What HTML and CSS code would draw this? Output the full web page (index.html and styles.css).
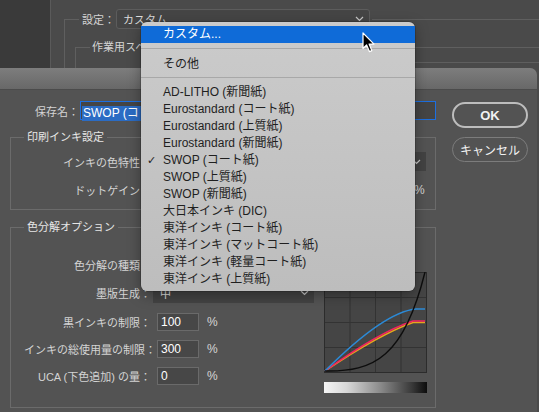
FILE: index.html
```html
<!DOCTYPE html>
<html lang="ja">
<head>
<meta charset="utf-8">
<title>カスタム CMYK</title>
<link rel="stylesheet" href="styles.css">
</head>
<body>
<div class="screen">
  <div class="backdrop">
    <div class="side"></div>
    <div class="back-main">
      <fieldset class="back-group">
        <legend class="back-legend">
          <div class="legend-row">
            <span class="back-label">設定：</span>
            <span class="back-select"><span>カスタム</span><svg class="chev" width="9" height="6" viewBox="0 0 9 6"><path d="M1 1 L4.5 4.5 L8 1" fill="none" stroke="#c8c8c8" stroke-width="1.2"/></svg></span>
          </div>
        </legend>
        <fieldset class="ws-group">
          <legend class="ws-legend">作業用スペ</legend>
          <div class="ws-line"></div>
        </fieldset>
      </fieldset>
    </div>
  </div>

  <div class="dialog">
    <div class="titlebar"></div>
    <div class="dlg-body">
      <div class="main">
        <div class="name-row">
          <span class="name-label">保存名：</span>
          <div class="name-input"><span class="sel">SWOP (コ</span></div>
        </div>

        <fieldset class="group g1">
          <legend>印刷インキ設定</legend>
          <div class="row">
            <span class="lbl lbl-open">インキの色特性</span>
            <div class="select wide"><svg class="chev" width="9" height="6" viewBox="0 0 9 6"><path d="M1 1 L4.5 4.5 L8 1" fill="none" stroke="#c8c8c8" stroke-width="1.2"/></svg></div>
          </div>
          <div class="row">
            <span class="lbl">ドットゲイン：</span>
            <div class="field dot"></div><span class="pct far">%</span>
          </div>
        </fieldset>

        <fieldset class="group g2">
          <legend>色分解オプション</legend>
          <div class="g2-inner">
            <div class="opts">
              <div class="row r-type">
                <span class="lbl">色分解の種類：</span>
              </div>
              <div class="row r-black">
                <span class="lbl">墨版生成：</span>
                <div class="select mid"><span>中</span><svg class="chev" width="9" height="6" viewBox="0 0 9 6"><path d="M1 1 L4.5 4.5 L8 1" fill="none" stroke="#c8c8c8" stroke-width="1.2"/></svg></div>
              </div>
              <div class="row r-num">
                <span class="lbl">黒インキの制限：</span>
                <div class="field num">100</div><span class="pct">%</span>
              </div>
              <div class="row r-num">
                <span class="lbl">インキの総使用量の制限：</span>
                <div class="field num">300</div><span class="pct">%</span>
              </div>
              <div class="row r-num">
                <span class="lbl">UCA (下色追加) の量：</span>
                <div class="field num">0</div><span class="pct">%</span>
              </div>
            </div>
            <div class="graph-col">
              <svg class="graph" width="103" height="101" viewBox="0 0 103 101">
                <rect x="0.5" y="0.5" width="102" height="100" fill="#454545" stroke="#2c2c2c"/>
                <path d="M26 1 V100 M51.5 1 V100 M77 1 V100 M1 25.5 H102 M1 50.5 H102 M1 75.5 H102" stroke="#333333" stroke-width="1" fill="none"/>
                <path d="M1 99 Q56 62 89 50.5 L101 50.5" fill="none" stroke="#e3a81c" stroke-width="1.5"/>
                <path d="M1 99 Q55 60 89 49 L101 49" fill="none" stroke="#f2245f" stroke-width="1.5"/>
                <path d="M1 99 Q60 40 92 37 L101 37" fill="none" stroke="#2c8ad6" stroke-width="1.5"/>
                <path d="M1 99 C50 100 80 85 101 0" fill="none" stroke="#0d0d0d" stroke-width="1.4"/>
              </svg>
              <div class="ramp"></div>
            </div>
          </div>
        </fieldset>
      </div>

      <div class="buttons">
        <button class="btn ok" type="button">OK</button>
        <button class="btn cancel" type="button">キャンセル</button>
      </div>
    </div>
  </div>

  <div class="menu">
    <div class="item hl"><span class="ck"></span><span>カスタム...</span></div>
    <div class="sep sep1"></div>
    <div class="item"><span class="ck"></span><span>その他</span></div>
    <div class="sep sep2"></div>
    <div class="item"><span class="ck"></span><span>AD-LITHO (新聞紙)</span></div>
    <div class="item"><span class="ck"></span><span>Eurostandard (コート紙)</span></div>
    <div class="item"><span class="ck"></span><span>Eurostandard (上質紙)</span></div>
    <div class="item"><span class="ck"></span><span>Eurostandard (新聞紙)</span></div>
    <div class="item"><span class="ck">✓</span><span>SWOP (コート紙)</span></div>
    <div class="item"><span class="ck"></span><span>SWOP (上質紙)</span></div>
    <div class="item"><span class="ck"></span><span>SWOP (新聞紙)</span></div>
    <div class="item"><span class="ck"></span><span>大日本インキ (DIC)</span></div>
    <div class="item"><span class="ck"></span><span>東洋インキ (コート紙)</span></div>
    <div class="item"><span class="ck"></span><span>東洋インキ (マットコート紙)</span></div>
    <div class="item"><span class="ck"></span><span>東洋インキ (軽量コート紙)</span></div>
    <div class="item"><span class="ck"></span><span>東洋インキ (上質紙)</span></div>
  </div>

  <svg class="cursor" width="14" height="22" viewBox="0 0 14 22">
    <path d="M1 1 L1 16.5 L4.6 13 L7.4 19.6 L9.8 18.6 L7.1 12.1 L12 12.1 Z" fill="#000" stroke="#fff" stroke-width="1.2" stroke-linejoin="round"/>
  </svg>
</div>
</body>
</html>
```

FILE: styles.css
```css
* { box-sizing: border-box; }

body {
  margin: 0;
  background: #4a4a4a;
  font-family: "Liberation Sans", "Noto Sans CJK JP", sans-serif;
}

.screen {
  position: relative;
  width: 539px;
  height: 412px;
  overflow: hidden;
  background: #4a4a4a;
}

/* ---------- backdrop (parent dialog) ---------- */
.backdrop {
  display: flex;
  height: 68px;
  overflow: hidden;
}
.side {
  flex: none;
  width: 51px;
  background: #3a3a3a;
  border-right: 1px solid #5a5a5a;
}
.back-main {
  flex: 1;
  min-width: 0;
  padding-top: 9px;
}
.back-group {
  margin: 0 0 0 13px;
  padding: 0 0 0 10px;
  min-width: 0;
  height: 200px;
  border: 1px solid #5f5f5f;
  border-right: none;
  border-bottom: none;
}
.back-legend {
  margin-left: 4px;
  padding: 0 2px 0 3px;
}
.legend-row {
  display: flex;
  align-items: center;
  height: 20px;
}
.back-label {
  width: 34px;
  font-size: 11px;
  color: #d4d4d4;
}
.back-select {
  display: flex;
  align-items: center;
  justify-content: space-between;
  width: 254px;
  height: 20px;
  padding: 0 5px 0 6px;
  border: 1px solid #5c5c5c;
  border-radius: 3px;
  background: #454545;
  font-size: 11px;
  color: #dcdcdc;
}
.ws-group {
  margin: 10px 0 0 0;
  padding: 0 0 0 14px;
  min-width: 0;
  height: 100px;
  border: 1px solid #5f5f5f;
  border-right: none;
  border-bottom: none;
}
.ws-legend {
  width: 54px;
  padding: 0 2px;
  font-size: 11px;
  line-height: 16px;
  color: #d4d4d4;
  white-space: nowrap;
}
.ws-line {
  margin: 7px 0 0 120px;
  border-top: 1px solid #5f5f5f;
}

/* ---------- dialog ---------- */
.dialog {
  width: 537px;
  height: 344px;
  background: #535353;
  border-top-right-radius: 7px;
  overflow: hidden;
}
.titlebar {
  height: 22px;
  background: linear-gradient(#7d7d7d, #686868);
  border-bottom: 1px solid #4b4b4b;
}
.dlg-body {
  display: flex;
  padding: 11px 0 0 10px;
}
.main {
  width: 426px;
  flex: none;
}

.name-row {
  display: flex;
  align-items: center;
  height: 19px;
}
.name-label {
  width: 70px;
  padding-right: 1px;
  text-align: right;
  font-size: 11px;
  color: #d4d4d4;
}
.name-input {
  flex: 1;
  height: 19px;
  padding: 1px 0 0 1px;
  border: 1px solid #1d6fe0;
  background: #454545;
}
.sel {
  display: inline-block;
  height: 15px;
  padding: 0 2px 0 1px;
  background: #2b6cc4;
  color: #fff;
  font-size: 12px;
  line-height: 15px;
}

.group {
  margin: 10px 0 0 0;
  min-width: 0;
  border: 1px solid #6b6b6b;
  padding: 0 8px 0 13px;
}
.group legend {
  padding: 0 3px;
  font-size: 11px;
  line-height: 15px;
  color: #e6e6e6;
}
.g1 {
  padding-top: 7px;
  padding-bottom: 10px;
}
.g2 {
  padding-bottom: 14px;
}

.row {
  display: flex;
  align-items: center;
  height: 19px;
}
.g1 .row + .row { margin-top: 9px; }

.lbl {
  flex: none;
  width: 127px;
  text-align: right;
  font-size: 11px;
  color: #d4d4d4;
  white-space: nowrap;
}
.lbl-open {
  padding-right: 11px;
}
.select {
  display: flex;
  align-items: center;
  justify-content: space-between;
  height: 19px;
  padding: 0 5px 0 7px;
  background: #434343;
  font-size: 11px;
  color: #e0e0e0;
}
.select.wide {
  justify-content: flex-end;
  margin-left: 6px;
  width: 269px;
}
.select.mid {
  margin-left: 2px;
  width: 161px;
  height: 20px;
}
.field {
  height: 18px;
  margin-left: 6px;
  padding-left: 3px;
  border: 1px solid #6a6a6a;
  background: #474747;
  font-size: 12px;
  line-height: 16px;
  color: #fff;
}
.field.dot { width: 240px; }
.field.num { width: 42px; }
.pct {
  margin-left: 8px;
  font-size: 12px;
  color: #d6d6d6;
}
.pct.far { margin-left: 17px; }

.g2-inner {
  display: flex;
}
.opts {
  width: 300px;
  flex: none;
  padding-top: 20px;
}
.r-type { height: 20px; }
.r-black {
  height: 20px;
  margin-top: 8px;
}
.r-num {
  height: 18px;
  margin-top: 9px;
}
.r-black + .r-num { margin-top: 10px; }

.graph-col {
  width: 103px;
  flex: none;
  padding-top: 37px;
}
.graph { display: block; }
.ramp {
  margin-top: 9px;
  height: 11px;
  background: linear-gradient(to right, #f5f5f5 0%, #d8d8d8 22%, #8a8a8a 55%, #3a3a3a 85%, #0c0c0c 100%);
}

.buttons {
  width: 76px;
  flex: none;
  margin-left: 16px;
  padding-top: 1px;
  display: flex;
  flex-direction: column;
  gap: 9px;
}
.btn {
  width: 76px;
  height: 25px;
  padding: 0;
  border-radius: 13px;
  background: transparent;
  font-family: "Liberation Sans", "Noto Sans CJK JP", sans-serif;
  color: #f2f2f2;
}
.btn.ok {
  height: 26px;
  border: 2px solid #bdbdbd;
  font-size: 13px;
  font-weight: bold;
}
.btn.cancel {
  border: 1.5px solid #7c7c7c;
  font-size: 12px;
}

/* ---------- popup menu ---------- */
.menu {
  position: absolute;
  left: 141px;
  top: 22px;
  width: 274px;
  height: 269px;
  padding-top: 4px;
  border-radius: 6px;
  background: linear-gradient(#cbcbcb, #bdbdbd);
  box-shadow: 0 4px 14px rgba(0, 0, 0, 0.35), 0 0 0 0.5px rgba(0, 0, 0, 0.3);
  color: #1f1f1f;
  font-size: 12px;
}
.item {
  display: grid;
  grid-template-columns: 22px 1fr;
  height: 17px;
  line-height: 17px;
  white-space: nowrap;
}
.item.hl {
  background: #0f6bd8;
  color: #fff;
}
.ck {
  padding-left: 6px;
  font-family: "DejaVu Sans", sans-serif;
  font-size: 11px;
}
.sep {
  border-top: 1px solid #a8a8a8;
}
.sep1 {
  margin: 5px 0 7px;
}
.sep2 {
  margin: 4px 0 6px;
}

.cursor {
  position: absolute;
  left: 362px;
  top: 32px;
}
```
